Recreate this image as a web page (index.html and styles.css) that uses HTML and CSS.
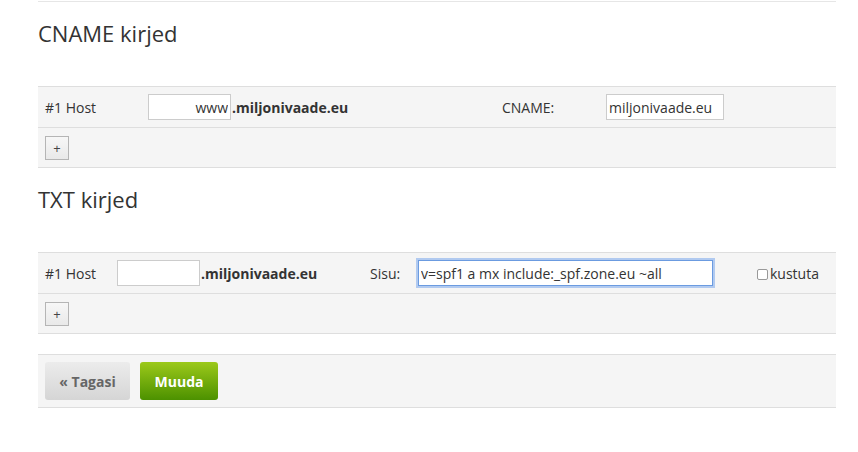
FILE: index.html
```
<!DOCTYPE html>
<html lang="et">
<head>
    <meta charset="UTF-8">
    <title>DNS kirjed</title>
    <link rel="stylesheet" href="styles.css">
</head>
<body>
    <div class="page">
        <div class="topline"></div>

        <!-- CNAME -->
        <h2 class="section-title">CNAME kirjed</h2>
        <div class="records">
            <div class="row row-main">
                <span class="lbl lbl-cname-host">#1 Host</span>
                <span class="host host-cname">
                    <input type="text" class="inp inp-host align-right" value="www"><b>.miljonivaade.eu</b>
                </span>
                <span class="lbl lbl-cname">CNAME:</span>
                <input type="text" class="inp inp-cname" value="miljonivaade.eu">
            </div>
            <div class="row">
                <button type="button" class="add">+</button>
            </div>
        </div>

        <!-- TXT -->
        <h2 class="section-title">TXT kirjed</h2>
        <div class="records">
            <div class="row row-main">
                <span class="lbl lbl-txt-host">#1 Host</span>
                <span class="host host-txt">
                    <input type="text" class="inp inp-host" value=""><b>.miljonivaade.eu</b>
                </span>
                <span class="lbl lbl-sisu">Sisu:</span>
                <input type="text" class="inp inp-sisu focused" value="v=spf1 a mx include:_spf.zone.eu ~all">
                <label class="del"><input type="checkbox" class="chk">kustuta</label>
            </div>
            <div class="row">
                <button type="button" class="add">+</button>
            </div>
        </div>

        <div class="actions">
            <button type="button" class="btn btn-back">&laquo; Tagasi</button>
            <button type="button" class="btn btn-save">Muuda</button>
        </div>
    </div>
</body>
</html>
```

FILE: styles.css
```
*{
    margin: 0;
    padding: 0;
    box-sizing: border-box;
}
body{
    font-family: "Open Sans", sans-serif;
    font-size: 14px;
    color: #333;
    background: #fff;
}
.page{
    margin-left: 38px;
    width: 798px;
}
.topline{
    height: 2px;
    border-bottom: 1px solid #e6e6e6;
}
.section-title{
    font-size: 22px;
    font-weight: 400;
    line-height: 30px;
    margin-top: 16px;
    margin-bottom: 38px;
    color: #333;
}
.records{
    background: #f5f5f5;
    border-top: 1px solid #dedede;
}
.row{
    display: flex;
    align-items: center;
    height: 40px;
    padding: 0 7px;
    border-bottom: 1px solid #dedede;
}
.row-main{
    height: 41px;
}
.lbl{
    flex: none;
}
.lbl-cname-host{ width: 103px; }
.lbl-txt-host{ width: 72px; }
.host{
    flex: none;
    display: flex;
    align-items: center;
}
.host-cname{ width: 354px; }
.host-txt{ width: 253px; }
.lbl-cname{ width: 104px; }
.lbl-sisu{ width: 48px; }
.host b{
    font-weight: 700;
    color: #333;
    margin-left: 1px;
}
.inp{
    flex: none;
    height: 26px;
    border: 1px solid #ccc;
    background: #fff;
    font-family: "Open Sans", sans-serif;
    font-size: 14px;
    color: #333;
    padding: 0 2px;
    outline: none;
}
.inp-host{ width: 83px; }
.align-right{ text-align: right; }
.inp-cname{ width: 118px; }
.inp-sisu{ width: 295px; }
.focused{
    border-color: #6b9be0;
    box-shadow: 0 0 0 2px rgba(120,165,235,0.55);
}
.del{
    display: flex;
    align-items: center;
    margin-left: 44px;
    color: #333;
}
.chk{
    appearance: none;
    -webkit-appearance: none;
    width: 11px;
    height: 11px;
    border: 1px solid #999;
    border-radius: 2px;
    background: #fff;
    margin: 2px 2px 0 0;
}
.add{
    width: 24px;
    height: 24px;
    border: 1px solid #b5b5b5;
    background: linear-gradient(#f7f7f7, #e9e9e9);
    font-family: "Open Sans", sans-serif;
    font-size: 13px;
    color: #444;
    line-height: 20px;
}
.actions{
    margin-top: 20px;
    height: 54px;
    background: #f5f5f5;
    border-top: 1px solid #dedede;
    border-bottom: 1px solid #dedede;
    display: flex;
    align-items: center;
    gap: 10px;
    padding: 0 7px;
}
.btn{
    height: 38px;
    border: none;
    border-radius: 3px;
    font-family: "Open Sans", sans-serif;
    font-size: 14px;
    font-weight: 700;
}
.btn-back{
    width: 85px;
    color: #666;
    background: linear-gradient(#ececec, #d5d5d5);
}
.btn-save{
    width: 78px;
    color: #fff;
    background: linear-gradient(#9cc91a, #4c9100);
}
```
